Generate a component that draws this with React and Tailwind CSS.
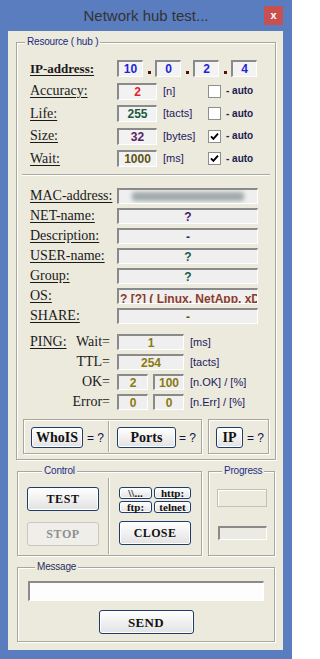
const serif = "font-['Liberation_Serif',serif]";
const sans = "font-['Liberation_Sans',sans-serif]";

function Group({ label, labelPos = '', className = '', children }) {
  return (
    <div className={`relative border border-[#a9a79d] shadow-[inset_1px_1px_0_#ffffff,1px_1px_0_#ffffff] ${className}`}>
      {label && (
        <span className={`absolute -top-[7px] bg-[#ece9dd] px-[2px] text-[10px] leading-[12px] tracking-[-0.2px] whitespace-nowrap ${sans} ${labelPos}`}>
          {label}
        </span>
      )}
      {children}
    </div>
  );
}

function Sunken({ className = '', children }) {
  return (
    <div className={`flex items-center justify-center overflow-hidden border-t-2 border-l-2 border-t-[#8a8a8a] border-l-[#8a8a8a] border-b border-r border-b-[#ffffff] border-r-[#ffffff] ${className}`}>
      {children}
    </div>
  );
}

function Val({ color, children }) {
  return <span className={`${sans} font-bold text-[12px] leading-none whitespace-nowrap ${color}`}>{children}</span>;
}

function Btn({ className = '', disabled, children }) {
  return (
    <div
      className={`flex items-center justify-center rounded-[3px] border ${serif} font-bold leading-none ${
        disabled
          ? 'border-[#c9c8c0] text-[#8f8f8f] bg-[#efeee8]'
          : 'border-[#1e3d6b] text-[#111111] bg-linear-to-b from-[#ffffff] to-[#e2e2e2] shadow-[inset_0_0_0_1px_#ffffff]'
      } ${className}`}
    >
      {children}
    </div>
  );
}

function Check({ checked }) {
  return (
    <div className="w-[13px] h-[13px] border border-[#8e8e8e] bg-white flex items-center justify-center shrink-0">
      {checked && (
        <svg width="9" height="9" viewBox="0 0 9 9">
          <path d="M1 4.3 L3.4 6.8 L8 1.6" fill="none" stroke="#000000" strokeWidth="1.9" />
        </svg>
      )}
    </div>
  );
}

function Unit({ children, className = '' }) {
  return <span className={`${sans} text-[11px] leading-none text-[#1b1b5e] whitespace-nowrap ${className}`}>{children}</span>;
}

function Label({ children, bold }) {
  return (
    <span className={`w-[87px] shrink-0 ${serif} ${bold ? 'font-bold text-[13px]' : 'text-[14px]'} leading-none text-[#1a1a1a] underline underline-offset-[2px]`}>
      {children}
    </span>
  );
}

function ParamRow({ label, value, color, unit, checked }) {
  return (
    <div className="flex items-center h-[17px]">
      <Label>{label}</Label>
      <Sunken className="w-[40px] h-[17px] bg-[#f2f2f2]">
        <Val color={color}>{value}</Val>
      </Sunken>
      <Unit className="ml-[6px] w-[45px]">{unit}</Unit>
      <Check checked={checked} />
      <span className={`ml-[5px] ${sans} text-[10px] font-bold leading-none text-[#1b1b4e]`}>- auto</span>
    </div>
  );
}

function InfoRow({ label, children, left }) {
  return (
    <div className="flex items-center h-[16px]">
      <Label>{label}</Label>
      <Sunken className={`w-[141px] h-[16px] bg-[#efefef] ${left ? 'justify-start' : ''}`}>{children}</Sunken>
    </div>
  );
}

function PingRow({ first, label, children, unit }) {
  return (
    <div className="flex items-center h-[16px]">
      <div className="w-[87px] shrink-0 flex items-center justify-between pr-[7px]">
        <span className={`${serif} text-[14px] leading-none text-[#1a1a1a] underline underline-offset-[2px]`}>{first}</span>
        <span className={`${serif} text-[14px] leading-none text-[#1a1a1a]`}>{label}</span>
      </div>
      {children}
      <Unit className="ml-[6px]">{unit}</Unit>
    </div>
  );
}

function PBox({ className = '', children }) {
  return (
    <Sunken className={`h-[16px] bg-[#efefef] ${className}`}>
      <Val color="text-[#8a7a12]">{children}</Val>
    </Sunken>
  );
}

function Dot() {
  return (
    <div className="w-[12px] h-[17px] flex items-end justify-center pb-[3px]">
      <div className="w-[3px] h-[3px] bg-[#5a0a0a]" />
    </div>
  );
}

function VSep({ className = '' }) {
  return <div className={`w-[2px] border-l border-l-[#a9a79d] border-r border-r-[#ffffff] ${className}`} />;
}

function Eq({ className = '' }) {
  return <span className={`${sans} text-[12px] leading-none text-[#12124a] whitespace-nowrap ${className}`}>= ?</span>;
}

export default function App() {
  return (
    <div className="w-[292px] h-[659px] bg-[#5a7dbf] flex flex-col">
      <div className="h-[31px] grid grid-cols-[1fr_auto_1fr] items-center">
        <div />
        <span className={`${sans} text-[15px] leading-none text-[#333333] whitespace-nowrap`}>Network hub test...</span>
        <div className="justify-self-end mr-[9px] w-[19px] h-[19px] bg-[#c75050] flex items-center justify-center">
          <span className={`${sans} text-[11px] font-bold leading-none text-white`}>x</span>
        </div>
      </div>

      <div className="ml-[8px] w-[275px] h-[619px] bg-[#ece9dd] pt-[11px] pl-[8px] flex flex-col">
        {/* Resource group */}
        <Group label={<span className="text-[#1a2a80]">Resource ( hub )</span>} labelPos="left-[8px]" className="w-[260px] h-[418px]">
          <div className="flex flex-col pt-[17px] px-[5px]">
            <div className="flex flex-col gap-[5.5px] pl-[8px]">
              <div className="flex items-center h-[17px]">
                <Label bold>IP-address:</Label>
                <Sunken className="w-[26px] h-[17px] bg-[#f3f3f3]"><Val color="text-[#2323d8]">10</Val></Sunken>
                <Dot />
                <Sunken className="w-[26px] h-[17px] bg-[#f3f3f3]"><Val color="text-[#2323d8]">0</Val></Sunken>
                <Dot />
                <Sunken className="w-[26px] h-[17px] bg-[#f3f3f3]"><Val color="text-[#2323d8]">2</Val></Sunken>
                <Dot />
                <Sunken className="w-[26px] h-[17px] bg-[#f3f3f3]"><Val color="text-[#2323d8]">4</Val></Sunken>
              </div>
              <ParamRow label="Accuracy:" value="2" color="text-[#e8202a]" unit="[n]" checked={false} />
              <ParamRow label="Life:" value="255" color="text-[#1c5a3c]" unit="[tacts]" checked={false} />
              <ParamRow label="Size:" value="32" color="text-[#5a2266]" unit="[bytes]" checked />
              <ParamRow label="Wait:" value="1000" color="text-[#5e5410]" unit="[ms]" checked />
            </div>

            <div className="mt-[7px] h-[2px] border-t border-t-[#aaa89e] border-b border-b-[#ffffff]" />

            <div className="mt-[12px] flex flex-col gap-[4px] pl-[8px]">
              <InfoRow label="MAC-address:">
                <div className="w-[112px] h-[9px] rounded-[3px] bg-[#a0aaa9] blur-[2px]" />
              </InfoRow>
              <InfoRow label="NET-name:"><Val color="text-[#4a1a6a]">?</Val></InfoRow>
              <InfoRow label="Description:"><Val color="text-[#2a2a5a]">-</Val></InfoRow>
              <InfoRow label="USER-name:"><Val color="text-[#1a5a4a]">?</Val></InfoRow>
              <InfoRow label="Group:"><Val color="text-[#1a5a4a]">?</Val></InfoRow>
              <InfoRow label="OS:" left>
                <span className="pl-[1px]"><Val color="text-[#8c3b2b]">? [?] ( Linux, NetApp, xDSL, ... )</Val></span>
              </InfoRow>
              <InfoRow label="SHARE:"><Val color="text-[#5e5a12]">-</Val></InfoRow>
            </div>

            <div className="mt-[10px] flex flex-col gap-[4px] pl-[8px]">
              <PingRow first="PING:" label="Wait=" unit="[ms]">
                <PBox className="w-[67px]">1</PBox>
              </PingRow>
              <PingRow label="TTL=" unit="[tacts]">
                <PBox className="w-[67px]">254</PBox>
              </PingRow>
              <PingRow label="OK=" unit="[n.OK] / [%]">
                <div className="flex gap-[5px]">
                  <PBox className="w-[31px]">2</PBox>
                  <PBox className="w-[31px]">100</PBox>
                </div>
              </PingRow>
              <PingRow label="Error=" unit="[n.Err] / [%]">
                <div className="flex gap-[5px]">
                  <PBox className="w-[31px]">0</PBox>
                  <PBox className="w-[31px]">0</PBox>
                </div>
              </PingRow>
            </div>

            <div className="mt-[9px] pl-[1px] flex gap-[6px]">
              <Group className="w-[179px] h-[35px] flex">
                <div className="w-[84px] flex items-center pl-[7px] pt-[2px]">
                  <Btn className="w-[52px] h-[21px] text-[14px]">WhoIS</Btn>
                  <Eq className="ml-[4px]" />
                </div>
                <VSep className="my-[1px]" />
                <div className="flex items-center pl-[7px] pt-[2px]">
                  <Btn className="w-[59px] h-[21px] text-[14px]">Ports</Btn>
                  <Eq className="ml-[3px]" />
                </div>
              </Group>
              <Group className="w-[61px] h-[35px] flex">
                <div className="flex items-center pl-[7px] pt-[2px]">
                  <Btn className="w-[27px] h-[21px] text-[14px]">IP</Btn>
                  <Eq className="ml-[4px]" />
                </div>
              </Group>
            </div>
          </div>
        </Group>

        {/* Control + Progress */}
        <div className="mt-[11px] ml-[1px] flex gap-[6px]">
          <Group label={<span className="text-[#1e2e86]">Control</span>} labelPos="left-[24px]" className="w-[185px] h-[85px] flex items-start">
            <div className="ml-[9px] mt-[15px] w-[72px] flex flex-col gap-[11px]">
              <Btn className="h-[24px] text-[12px] tracking-[0.6px]">TEST</Btn>
              <Btn disabled className="h-[24px] text-[12px] tracking-[0.6px]">STOP</Btn>
            </div>
            <VSep className="ml-[9px] mt-[6px] h-[76px]" />
            <div className="ml-[9px] mt-[15px] w-[72px] flex flex-col">
              <div className="grid grid-cols-[33px_37px] gap-[2px]">
                <Btn className="h-[12px] text-[11px]">{'\\\\...'}</Btn>
                <Btn className="h-[12px] text-[11px]">http:</Btn>
                <Btn className="h-[12px] text-[11px]">ftp:</Btn>
                <Btn className="h-[12px] text-[11px]">telnet</Btn>
              </div>
              <Btn className="mt-[8px] h-[24px] text-[12px] tracking-[0.4px]">CLOSE</Btn>
            </div>
          </Group>
          <Group label={<span className="text-[#1e2e86]">Progress</span>} labelPos="left-[13px]" className="w-[67px] h-[85px]">
            <div className="pl-[8px] pt-[17px] flex flex-col">
              <div className="w-[50px] h-[18px] border border-[#c2c1b8] shadow-[inset_1px_1px_0_#ffffff]" />
              <Sunken className="ml-[1px] mt-[19px] w-[49px] h-[14px] bg-[#ecebe3]" />
            </div>
          </Group>
        </div>

        {/* Message */}
        <Group label={<span className="text-[#2a3060]">Message</span>} labelPos="left-[17px]" className="mt-[11px] ml-[1px] w-[258px] h-[75px]">
          <div className="pt-[13px] flex flex-col items-center">
            <Sunken className="w-[236px] h-[20px] bg-[#fdfdfd]" />
            <Btn className="mt-[9px] w-[95px] h-[24px] text-[13px] tracking-[0.3px]">SEND</Btn>
          </div>
        </Group>
      </div>
    </div>
  );
}
